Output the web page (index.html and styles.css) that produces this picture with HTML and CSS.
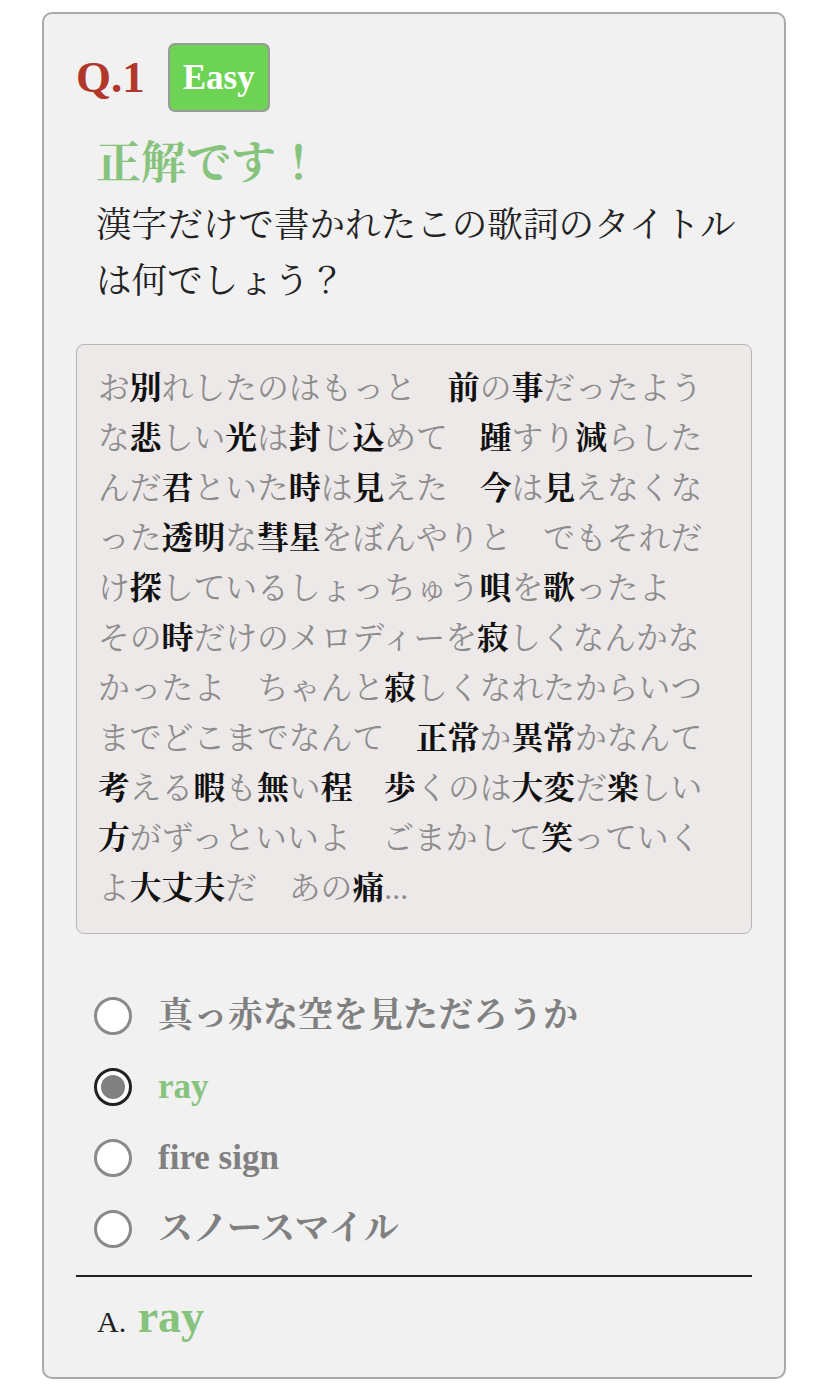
FILE: index.html
```html
<!DOCTYPE html>
<html lang="ja">
<head>
<meta charset="utf-8">
<title>Q.1</title>
<link rel="stylesheet" href="styles.css">
</head>
<body>
<div class="card">
  <div class="head">
    <span class="qnum">Q.1</span>
    <span class="badge">Easy</span>
  </div>
  <div class="result">正解です！</div>
  <p class="question">漢字だけで書かれたこの歌詞のタイトルは何でしょう？</p>
  <div class="lyrics">お<b>別</b>れしたのはもっと　<b>前</b>の<b>事</b>だったような<b>悲</b>しい<b>光</b>は<b>封</b>じ<b>込</b>めて　<b>踵</b>すり<b>減</b>らしたんだ<b>君</b>といた<b>時</b>は<b>見</b>えた　<b>今</b>は<b>見</b>えなくなった<b>透明</b>な<b>彗星</b>をぼんやりと　でもそれだけ<b>探</b>しているしょっちゅう<b>唄</b>を<b>歌</b>ったよ　その<b>時</b>だけのメロディーを<b>寂</b>しくなんかなかったよ　ちゃんと<b>寂</b>しくなれたからいつまでどこまでなんて　<b>正常</b>か<b>異常</b>かなんて<b>考</b>える<b>暇</b>も<b>無</b>い<b>程</b>　<b>歩</b>くのは<b>大変</b>だ<b>楽</b>しい<b>方</b>がずっといいよ　ごまかして<b>笑</b>っていくよ<b>大丈夫</b>だ　あの<b>痛</b>...</div>
  <ul class="options">
    <li class="option"><span class="radio"></span><span class="label">真っ赤な空を見ただろうか</span></li>
    <li class="option"><span class="radio checked"><span class="dot"></span></span><span class="label correct">ray</span></li>
    <li class="option"><span class="radio"></span><span class="label">fire sign</span></li>
    <li class="option"><span class="radio"></span><span class="label">スノースマイル</span></li>
  </ul>
  <div class="answer"><span class="a-prefix">A.</span> <span class="a-text">ray</span></div>
</div>
</body>
</html>
```

FILE: styles.css
```css
html, body {
  margin: 0;
  padding: 0;
  background: #ffffff;
}

body {
  font-family: "Liberation Serif", "Noto Serif CJK JP", "Noto Sans CJK JP", serif;
  color: #222222;
}

.card {
  margin: 12px 42px 18px;
  border: 2px solid #a9a9a9;
  border-radius: 10px;
  background: #f1f1f1;
  padding: 0 32px 25px;
}

.head {
  display: flex;
  align-items: center;
  gap: 23px;
  padding-top: 29px;
}

.qnum {
  font-size: 45px;
  font-weight: bold;
  color: #b2372b;
  line-height: 1;
}

.badge {
  box-sizing: border-box;
  height: 69px;
  padding: 0 13px;
  line-height: 65px;
  font-size: 35px;
  font-weight: bold;
  color: #ffffff;
  background: #6dd354;
  border: 2px solid #9a9a9a;
  border-radius: 7px;
}

.result {
  margin: 24px 0 0 20px;
  font-size: 45px;
  line-height: 56px;
  font-weight: bold;
  color: #86c37d;
}

.question {
  margin: 5px 0 0 20px;
  font-size: 35.6px;
  line-height: 56px;
  color: #222222;
}

.lyrics {
  margin-top: 35px;
  border: 1px solid #b7b4b4;
  border-radius: 8px;
  background: #ede9e9;
  padding: 19px 28px 19px 21px;
  font-size: 31.8px;
  line-height: 50px;
  color: #8c8c8c;
  line-break: anywhere;
}

.lyrics b {
  font-weight: bold;
  color: #111111;
}

.options {
  list-style: none;
  margin: 57px 0 0;
  padding: 0 0 0 18px;
  display: flex;
  flex-direction: column;
  gap: 21px;
}

.option {
  display: flex;
  align-items: center;
  gap: 26px;
  height: 50px;
}

.radio {
  box-sizing: border-box;
  width: 38px;
  height: 38px;
  border: 3px solid #8a8a8a;
  border-radius: 50%;
  background: #ffffff;
  display: flex;
  align-items: center;
  justify-content: center;
  flex: none;
}

.radio.checked {
  border-color: #222222;
}

.dot {
  width: 24px;
  height: 24px;
  border-radius: 50%;
  background: #808080;
}

.label {
  font-size: 35px;
  font-weight: bold;
  color: #808080;
  line-height: 50px;
}

.label.correct {
  color: #86c37d;
}

.answer {
  margin-top: 21px;
  border-top: 2px solid #222222;
  padding: 10px 0 0 21px;
  font-size: 46px;
  line-height: 60px;
}

.a-prefix {
  font-size: 30px;
  color: #222222;
}

.a-text {
  font-weight: bold;
  color: #86c37d;
}
```
